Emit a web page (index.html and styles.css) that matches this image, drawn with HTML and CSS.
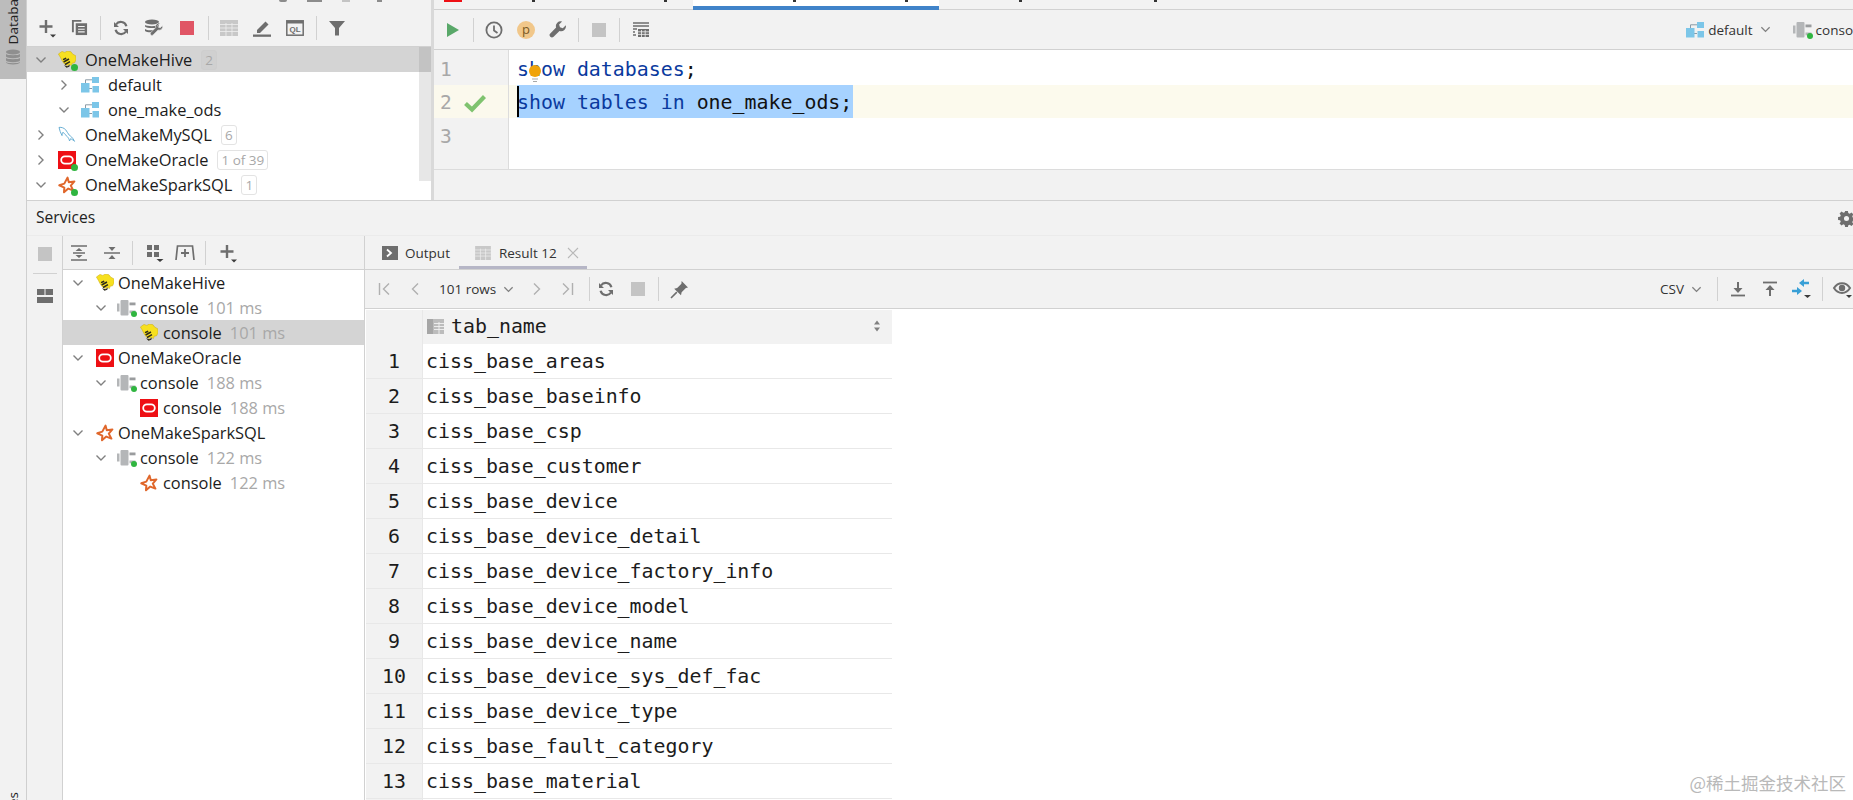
FILE: index.html
```html
<!DOCTYPE html>
<html lang="en">
<head>
<meta charset="utf-8">
<title>Services</title>
<link rel="stylesheet" href="styles.css">
</head>
<body>
<svg class="sprite" xmlns="http://www.w3.org/2000/svg">
  <symbol id="hive" viewBox="0 0 18 18">
    <path d="M.4 3 4 .4 6.800 1.400 9.400 0l3.600.8 1.800 2.400 3 1.600.2 4-1.400 3-2.400.4-.8 2.400-2-1.200-2.400 1-3-1.800-2-3L2.400 6.400z" fill="#f7e01f" stroke="#c9a80c" stroke-width=".5"/>
    <path d="M5 8.600l3.200-1.400M5.600 11l5.400-3M7 13.500l5-2.800" stroke="#2c2a1c" stroke-width="1.500" fill="none"/>
    <path d="M6 14.200l2.500 2.600 2.800-1 .6-2.200-2.500 1.600z" fill="#2c2a1c"/>
  </symbol>
  <symbol id="oracle" viewBox="0 0 18 18">
    <rect width="18" height="18" fill="#ee0f14"/>
    <rect x="3.200" y="5.300" width="11.600" height="7.400" rx="3.700" fill="none" stroke="#fff" stroke-width="1.800"/>
  </symbol>
  <symbol id="spark" viewBox="0 0 18 18">
    <path d="M9.500 1.600l1.300 4.600 5.600-.8-3.600 4.200 2.600 5-5.100-2L6 16.300l.3-4.700-5-2.300 5-1.700z" fill="none" stroke="#e0672b" stroke-width="2" stroke-linejoin="round"/>
  </symbol>
  <symbol id="dolphin" viewBox="0 0 18 18">
    <path d="M1 1.400c2.600-.3 4.800.5 6.600 2.300 1.600 1.600 2.100 4 3.600 5.400 1.500 1.100 3.400 2.200 5.300 6.200-1.700-1.600-2.800-2-3.900-2.600-.2 1-.8 1.600-1.100 2.200-.3-1.600-.9-2.800-2.200-4.300C7.600 8.700 6.200 8 5 6.200 4.200 7.200 4 8.300 4 9.600 2.700 7.300 1.600 4.200 1 1.400z" fill="none" stroke="#5aa7cf" stroke-width=".9" stroke-linejoin="round"/>
  </symbol>
  <symbol id="schema" viewBox="0 0 18 16">
    <path d="M4.500 8V2.800h6.500M8 11.500h3" fill="none" stroke="#8a9aa6" stroke-width="1"/>
    <rect x="11" y="0" width="7" height="6" fill="#7cc6e8"/>
    <rect x="0" y="6" width="8.500" height="9.500" fill="#7cc6e8"/>
    <rect x="11.500" y="9" width="6.500" height="6.500" fill="#7cc6e8"/>
  </symbol>
  <symbol id="plug" viewBox="0 0 20 16">
    <rect x="0" y="3.500" width="2.500" height="8" fill="#b4b6b8"/>
    <rect x="3.500" y="0" width="8" height="15.500" rx="1" fill="#b4b6b8"/>
    <rect x="12.500" y="2.500" width="6" height="2.800" fill="#9a9c9e"/>
    <rect x="12.500" y="10.500" width="6" height="2.800" fill="#b4b6b8"/>
  </symbol>
  <symbol id="chev-d" viewBox="0 0 12 12">
    <path d="M1.500 3.500 6 8l4.500-4.500" fill="none" stroke="#808080" stroke-width="1.400"/>
  </symbol>
  <symbol id="chev-r" viewBox="0 0 12 12">
    <path d="M3.500 1.500 8 6l-4.500 4.500" fill="none" stroke="#808080" stroke-width="1.400"/>
  </symbol>
  <symbol id="plus" viewBox="0 0 20 20">
    <path d="M7 1v13M.5 7.500h13" stroke="#6e6e6e" stroke-width="2.400" fill="none"/>
    <path d="M11 15.500h6l-3 3z" fill="#3c3c3c"/>
  </symbol>
  <symbol id="grid" viewBox="0 0 18 16">
    <rect width="18" height="16" fill="#c8c8c8"/>
    <path d="M0 4.500h18M0 8h18M0 11.500h18M6 3v13M12 3v13" stroke="#efefef" stroke-width=".8"/>
  </symbol>
  <symbol id="stop" viewBox="0 0 14 14"><rect width="14" height="14" fill="currentColor"/></symbol>
  <symbol id="refresh" viewBox="0 0 16 16">
    <path d="M13.400 6.200A5.800 5.800 0 0 0 3 4.500M2.600 9.800A5.800 5.800 0 0 0 13 11.500" fill="none" stroke="#6e6e6e" stroke-width="2.200"/>
    <path d="M1 2v5h5zM15 14V9h-5z" fill="#6e6e6e"/>
  </symbol>
  <symbol id="wrench" viewBox="0 0 18 18">
    <path d="M16.800 4.200l-3 3-2.800-.9-.9-2.800 3-3a4.800 4.800 0 0 0-6 6L1.300 12.400a2.300 2.300 0 0 0 3.300 3.300l5.900-5.800a4.800 4.800 0 0 0 6.300-5.700z" fill="#6e6e6e"/>
  </symbol>
</svg>

<div class="app">
  <aside class="stripe">
    <div class="stripe-tab">
      <span class="vtext">Database</span>
      <svg class="i-db" viewBox="0 0 16 16"><g fill="#8f8f8f"><ellipse cx="8" cy="3" rx="7" ry="2.600"/><path d="M1 5c1 1.600 13 1.600 14 0v2.500c-1 2.200-13 2.200-14 0zM1 9c1 1.600 13 1.600 14 0v2.500c-1 2.200-13 2.200-14 0zM1 13c1 1.600 13 1.600 14 0v.5c-1 2.600-13 2.600-14 0z"/></g></svg>
    </div>
    <span class="vtext vtext-bottom">Services</span>
  </aside>

  <main class="main">
    <section class="top">
      <div class="db">
        <div class="clip-row db-clip">
          <span class="frag frag-a"></span><span class="frag frag-b"></span><span class="frag frag-c"></span><span class="frag frag-d"></span>
        </div>
        <div class="toolbar db-toolbar">
          <span class="slot"><svg class="ic20 pl"><use href="#plus"/></svg></span>
          <span class="slot"><svg class="ic16b" viewBox="0 0 18 18"><path d="M1 1h10v2H3v11H1z" fill="#6e6e6e"/><path d="M5 4.500h12V17H5z" fill="#6e6e6e"/><path d="M7.500 8h7M7.500 10.800h7M7.500 13.600h7" stroke="#f2f2f2" stroke-width="1.200"/></svg></span>
          <i class="sep"></i>
          <span class="slot"><svg class="ic16"><use href="#refresh"/></svg></span>
          <span class="slot"><svg class="ic20b" viewBox="0 0 20 18"><ellipse cx="8" cy="3" rx="7" ry="2.500" fill="#6e6e6e"/><path d="M1 6c1.500 1.500 12 1.500 14 0v1.500c-2 2-12 2-14 0zM1 10c1.500 1.500 6 1.500 8 1v2c-2 .5-7 .2-8-1z" fill="#6e6e6e"/><path d="M18.500 6.500l-2.300 2.300-1.800-.6-.6-1.700 2.300-2.300a3.500 3.500 0 0 0-4.400 4.400l-5 5a1.700 1.700 0 0 0 2.400 2.400l5-5a3.500 3.500 0 0 0 4.400-4.500z" fill="#6e6e6e" stroke="#f2f2f2" stroke-width=".6"/></svg></span>
          <span class="slot"><svg class="ic14 red"><use href="#stop"/></svg></span>
          <i class="sep"></i>
          <span class="slot"><svg class="ic18w"><use href="#grid"/></svg></span>
          <span class="slot"><svg class="ic18" viewBox="0 0 18 18"><path d="M4 11 12.500 2.500l3 3L7 14H4z" fill="#6e6e6e"/><rect x="0" y="15.500" width="18" height="2.300" fill="#6e6e6e"/></svg></span>
          <span class="slot"><svg class="ic18" viewBox="0 0 18 18"><rect x=".8" y="1.800" width="16.400" height="14.400" fill="none" stroke="#6e6e6e" stroke-width="1.500"/><rect x="1" y="2" width="16" height="2.500" fill="#6e6e6e"/><text class="ql" x="9" y="13.400" text-anchor="middle">QL</text></svg></span>
          <i class="sep"></i>
          <span class="slot"><svg class="ic16" viewBox="0 0 16 16"><path d="M0 1h16L10 8v7.500H6V8z" fill="#6e6e6e"/></svg></span>
        </div>
        <div class="tree db-tree">
          <div class="node sel l0"><svg class="chev"><use href="#chev-d"/></svg><span class="ico"><svg class="ic18"><use href="#hive"/></svg><b class="dot"></b></span><span class="name">OneMakeHive</span><span class="count plain">2</span></div>
          <div class="node l1"><svg class="chev"><use href="#chev-r"/></svg><svg class="sch"><use href="#schema"/></svg><span class="name">default</span></div>
          <div class="node l1"><svg class="chev"><use href="#chev-d"/></svg><svg class="sch"><use href="#schema"/></svg><span class="name">one_make_ods</span></div>
          <div class="node l0"><svg class="chev"><use href="#chev-r"/></svg><span class="ico"><svg class="ic18"><use href="#dolphin"/></svg></span><span class="name">OneMakeMySQL</span><span class="count">6</span></div>
          <div class="node l0"><svg class="chev"><use href="#chev-r"/></svg><span class="ico"><svg class="ic18"><use href="#oracle"/></svg><b class="dot"></b></span><span class="name">OneMakeOracle</span><span class="count">1 of 39</span></div>
          <div class="node l0"><svg class="chev"><use href="#chev-d"/></svg><span class="ico"><svg class="ic18"><use href="#spark"/></svg><b class="dot"></b></span><span class="name">OneMakeSparkSQL</span><span class="count">1</span></div>
          <i class="overlay-scroll"></i>
        </div>
      </div>

      <div class="editor">
        <div class="tabbar">
          <span class="tab t1"><i class="tab-red"></i><span class="br br1"></span><span class="br br2"></span></span>
          <span class="tab active"><span class="br br3"></span><span class="br br4"></span></span>
          <span class="tab t3"><span class="br br5"></span><span class="br br6"></span></span>
        </div>
        <div class="toolbar ed-toolbar">
          <span class="slot"><svg class="ed-run" viewBox="0 0 14 16"><path d="M1 1l12 7-12 7z" fill="#59a869"/></svg></span>
          <i class="sep"></i>
          <span class="slot"><svg class="ic18" viewBox="0 0 18 18"><circle cx="9" cy="9" r="7.600" fill="none" stroke="#6e6e6e" stroke-width="1.800"/><path d="M9 4.500V9.500l3.500 2.500" fill="none" stroke="#6e6e6e" stroke-width="1.800"/></svg></span>
          <span class="slot"><span class="pbadge">p</span></span>
          <span class="slot"><svg class="ic18"><use href="#wrench"/></svg></span>
          <i class="sep"></i>
          <span class="slot"><svg class="ic14 muted"><use href="#stop"/></svg></span>
          <i class="sep"></i>
          <span class="slot"><svg class="ic18" viewBox="0 0 18 18"><path d="M1 2h16M1 5h16M1 8h4M1 11h2M1 14h3" stroke="#6e6e6e" stroke-width="1.400"/><path d="M6 8h11v8H6z" fill="#6e6e6e"/><path d="M6 10.800h11M6 13.400h11M9.500 9v7M13.200 9v7" stroke="#f2f2f2" stroke-width=".8"/></svg></span>
          <span class="spacer"></span>
          <svg class="sch"><use href="#schema"/></svg>
          <span class="tb-label">default</span>
          <svg class="chev chev-tb"><use href="#chev-d"/></svg>
          <span class="plugwrap tb-plug"><svg class="plug"><use href="#plug"/></svg><b class="dot small"></b></span>
          <span class="tb-label tb-console">console</span>
        </div>
        <div class="code">
          <div class="gutter">
            <div class="gl">1</div>
            <div class="gl cur">2<svg class="check" viewBox="0 0 22 18"><path d="M1.500 9.500 8 15.500 20.500 2.500" fill="none" stroke="#7fc36f" stroke-width="4.200"/></svg></div>
            <div class="gl">3</div>
          </div>
          <div class="lines">
            <div class="line"><span class="kw">show databases</span>;<svg class="bulb" viewBox="0 0 14 19"><circle cx="7" cy="6" r="6" fill="#f0a30a"/><path d="M4 14h6M5 16.500h4" stroke="#a8a8a8" stroke-width="1.200"/></svg></div>
            <div class="line cur"><span class="selection"><i class="caret"></i><span class="kw">show tables in</span> one_make_ods;</span></div>
            <div class="line"></div>
          </div>
        </div>
        <div class="ed-foot"></div>
      </div>
    </section>

    <section class="services">
      <header class="svc-head">
        <span>Services</span>
        <svg class="gear" viewBox="0 0 16 16"><path fill="#6e6e6e" fill-rule="evenodd" d="M6.500 0h3l.4 2.200 1.500.7L13.300 1.600l2.100 2.100-1.300 1.900.7 1.500L17 7v3l-2.200.4-.7 1.500 1.300 1.900-2.100 2.100-1.900-1.300-1.500.7L9.500 17h-3l-.4-2.200-1.500-.7-1.900 1.300L.6 13.300l1.300-1.900-.7-1.500L-1 9.500v-3l2.200-.4.700-1.500L.6 2.700 2.700.6l1.900 1.300 1.500-.7zM8 5.300a2.700 2.700 0 1 0 0 5.400 2.700 2.700 0 0 0 0-5.400z"/></svg>
      </header>
      <div class="svc-body">
        <div class="mini">
          <svg class="ic14 muted"><use href="#stop"/></svg>
          <i class="hsep"></i>
          <svg class="ic16" viewBox="0 0 16 16"><path d="M0 1h7.500v6H0zM8.500 1H16v6H8.500zM0 9h16v6H0z" fill="#6e6e6e"/></svg>
        </div>
        <div class="svc-tree">
          <div class="toolbar st-toolbar">
            <span class="slot"><svg class="ic16" viewBox="0 0 16 16"><path d="M0 1h16M0 15h16M2 8h12" stroke="#6e6e6e" stroke-width="1.500"/><path d="M8 3l3.500 3h-7zM8 13l3.500-3h-7z" fill="#6e6e6e"/></svg></span>
            <span class="slot"><svg class="ic16" viewBox="0 0 16 16"><path d="M0 8h16" stroke="#6e6e6e" stroke-width="1.500"/><path d="M8 6 4.500 2h7zM8 10l3.500 4h-7z" fill="#6e6e6e"/></svg></span>
            <i class="sep"></i>
            <span class="slot slot-group"><svg class="ic18" viewBox="0 0 18 18"><path d="M1 1h5v5H1zM8 1h5v5H8zM1 8h5v5H1zM8 8h5v5H8z" fill="#6e6e6e"/><path d="M10.500 15h7l-3.500 3z" fill="#3c3c3c"/></svg></span>
            <span class="slot"><svg class="ic20" viewBox="0 0 20 20"><path d="M1 17 2.500 3h15L19 17" fill="none" stroke="#6e6e6e" stroke-width="1.700"/><path d="M10 6v8M6 10h8" stroke="#6e6e6e" stroke-width="1.800"/></svg></span>
            <i class="sep"></i>
            <span class="slot slot-add"><svg class="ic20 pl"><use href="#plus"/></svg></span>
          </div>
          <div class="tree">
            <div class="node s0"><svg class="chev"><use href="#chev-d"/></svg><svg class="ic18 sicon"><use href="#hive"/></svg><span class="name">OneMakeHive</span></div>
            <div class="node s1"><svg class="chev"><use href="#chev-d"/></svg><span class="plugwrap"><svg class="plug"><use href="#plug"/></svg><b class="dot small"></b></span><span class="name">console</span><span class="ms">101 ms</span></div>
            <div class="node sel s2"><svg class="ic18 sicon"><use href="#hive"/></svg><span class="name">console</span><span class="ms">101 ms</span></div>
            <div class="node s0"><svg class="chev"><use href="#chev-d"/></svg><svg class="ic18 sicon"><use href="#oracle"/></svg><span class="name">OneMakeOracle</span></div>
            <div class="node s1"><svg class="chev"><use href="#chev-d"/></svg><span class="plugwrap"><svg class="plug"><use href="#plug"/></svg><b class="dot small"></b></span><span class="name">console</span><span class="ms">188 ms</span></div>
            <div class="node s2"><svg class="ic18 sicon"><use href="#oracle"/></svg><span class="name">console</span><span class="ms">188 ms</span></div>
            <div class="node s0"><svg class="chev"><use href="#chev-d"/></svg><svg class="ic18 sicon"><use href="#spark"/></svg><span class="name">OneMakeSparkSQL</span></div>
            <div class="node s1"><svg class="chev"><use href="#chev-d"/></svg><span class="plugwrap"><svg class="plug"><use href="#plug"/></svg><b class="dot small"></b></span><span class="name">console</span><span class="ms">122 ms</span></div>
            <div class="node s2"><svg class="ic18 sicon"><use href="#spark"/></svg><span class="name">console</span><span class="ms">122 ms</span></div>
          </div>
        </div>
        <div class="results">
          <div class="res-tabs">
            <span class="rtab"><svg class="rt-ico" viewBox="0 0 16 14"><rect width="16" height="14" fill="#6e6e6e"/><path d="M5 3.500 9 7l-4 3.500" fill="none" stroke="#fff" stroke-width="1.800"/></svg>Output</span>
            <span class="rtab on"><svg class="rt-ico"><use href="#grid"/></svg>Result 12<svg class="close" viewBox="0 0 12 12"><path d="M1 1l10 10M11 1 1 11" stroke="#b8b8b8" stroke-width="1.100"/></svg></span>
          </div>
          <div class="toolbar res-toolbar">
            <svg class="nav" viewBox="0 0 14 14"><path d="M1.500 1v12M11 1.500 5.500 7l5.500 5.500" fill="none" stroke="#b0b0b0" stroke-width="1.400"/></svg>
            <svg class="nav" viewBox="0 0 14 14"><path d="M10 1.500 4.500 7l5.500 5.500" fill="none" stroke="#b0b0b0" stroke-width="1.400"/></svg>
            <span class="rows">101 rows<svg class="chev chev-rows"><use href="#chev-d"/></svg></span>
            <svg class="nav" viewBox="0 0 14 14"><path d="M4 1.500 9.500 7 4 12.500" fill="none" stroke="#b0b0b0" stroke-width="1.400"/></svg>
            <svg class="nav" viewBox="0 0 14 14"><path d="M12.500 1v12M3 1.500 8.500 7 3 12.500" fill="none" stroke="#b0b0b0" stroke-width="1.400"/></svg>
            <i class="sep"></i>
            <span class="slot"><svg class="ic16"><use href="#refresh"/></svg></span>
            <span class="slot"><svg class="ic14 muted"><use href="#stop"/></svg></span>
            <i class="sep"></i>
            <span class="slot"><svg class="ic16b" viewBox="0 0 16 16"><path d="M10 0l6 6-2 .6-4 4-.6 2.900L3 7.200l2.800-.6 4-4z" fill="#6e6e6e"/><path d="M5.500 10.500 0 16" stroke="#6e6e6e" stroke-width="1.500"/></svg></span>
            <span class="spacer"></span>
            <span class="csv">CSV<svg class="chev chev-rows"><use href="#chev-d"/></svg></span>
            <i class="sep"></i>
            <span class="slot"><svg class="ic16" viewBox="0 0 16 16"><path d="M8 1v8" stroke="#6e6e6e" stroke-width="2"/><path d="M3.500 7h9L8 12z" fill="#6e6e6e"/><path d="M1 14.500h14" stroke="#6e6e6e" stroke-width="1.800"/></svg></span>
            <span class="slot"><svg class="ic16" viewBox="0 0 16 16"><path d="M1 1.500h14" stroke="#6e6e6e" stroke-width="1.800"/><path d="M8 7v8" stroke="#6e6e6e" stroke-width="2"/><path d="M3.500 9h9L8 4z" fill="#6e6e6e"/></svg></span>
            <span class="slot"><svg class="ic20" viewBox="0 0 20 20"><path d="M0 12h6M11 4h6" stroke="#389fd6" stroke-width="2.400"/><path d="M5 8l5 4-5 4zM12 0 7 4l5 4z" fill="#389fd6"/><path d="M12 16h7l-3.500 3z" fill="#3c3c3c"/></svg></span>
            <i class="sep"></i>
            <span class="slot"><svg class="ic20" viewBox="0 0 20 20"><path d="M1 9c4-6.500 12-6.500 16 0-4 6.500-12 6.500-16 0z" fill="none" stroke="#6e6e6e" stroke-width="2"/><circle cx="9" cy="9" r="3.200" fill="#6e6e6e"/><path d="M13 16h6l-3 3z" fill="#3c3c3c"/></svg></span>
          </div>
          <div class="grid">
            <div class="ghead">
              <span class="gnum"></span>
              <span class="gcell gtitle"><svg class="col-ico" viewBox="0 0 17 15"><rect width="17" height="15" fill="#bcbcbc"/><path d="M7 4.500h10M7 7.500h10M7 10.500h10M12 3v12" stroke="#f2f2f2" stroke-width=".9"/><rect x="0" width="6" height="15" fill="#a6a6a6"/></svg>tab_name<svg class="sort" viewBox="0 0 8 12"><path d="M4 .5l3 4H1zM4 11.500l3-4H1z" fill="#808080"/></svg></span>
            </div>
            <div class="grow"><span class="gnum">1</span><span class="gcell">ciss_base_areas</span></div>
            <div class="grow"><span class="gnum">2</span><span class="gcell">ciss_base_baseinfo</span></div>
            <div class="grow"><span class="gnum">3</span><span class="gcell">ciss_base_csp</span></div>
            <div class="grow"><span class="gnum">4</span><span class="gcell">ciss_base_customer</span></div>
            <div class="grow"><span class="gnum">5</span><span class="gcell">ciss_base_device</span></div>
            <div class="grow"><span class="gnum">6</span><span class="gcell">ciss_base_device_detail</span></div>
            <div class="grow"><span class="gnum">7</span><span class="gcell">ciss_base_device_factory_info</span></div>
            <div class="grow"><span class="gnum">8</span><span class="gcell">ciss_base_device_model</span></div>
            <div class="grow"><span class="gnum">9</span><span class="gcell">ciss_base_device_name</span></div>
            <div class="grow"><span class="gnum">10</span><span class="gcell">ciss_base_device_sys_def_fac</span></div>
            <div class="grow"><span class="gnum">11</span><span class="gcell">ciss_base_device_type</span></div>
            <div class="grow"><span class="gnum">12</span><span class="gcell">ciss_base_fault_category</span></div>
            <div class="grow"><span class="gnum">13</span><span class="gcell">ciss_base_material</span></div>
            <div class="grow"><span class="gnum"></span><span class="gcell"></span></div>
          </div>
        </div>
      </div>
    </section>
  </main>
</div>
<div class="watermark">@稀土掘金技术社区</div>
</body>
</html>
```

FILE: styles.css
```css
* { box-sizing: border-box; }
html, body { margin: 0; height: 100%; overflow: hidden; }
body {
  width: 1853px;
  height: 800px;
  background: #fff;
  color: #1c1c1c;
  font-family: "Open Sans", "Noto Sans", "Liberation Sans", sans-serif;
  font-size: 16.4px;
  position: relative;
}
.sprite { width: 0; height: 0; position: absolute; }
svg { display: block; flex: none; overflow: visible; }
i, b { display: block; font-style: normal; }

.app { display: flex; height: 800px; }

/* left stripe */
.stripe {
  width: 27px;
  flex: none;
  background: #f2f2f2;
  border-right: 1px solid #cfcfcf;
  display: flex;
  flex-direction: column;
  overflow: hidden;
}
.stripe-tab {
  height: 79px;
  width: 26px;
  background: #bcbcbc;
  display: flex;
  flex-direction: column;
  justify-content: flex-end;
  align-items: center;
  padding-bottom: 14px;
  gap: 5px;
  overflow: hidden;
}
.vtext {
  writing-mode: vertical-rl;
  transform: rotate(180deg);
  font-size: 13.5px;
  line-height: 16px;
  color: #222;
  flex: none;
}
.i-db { width: 16px; height: 16px; }
.vtext-bottom { margin-top: auto; margin-bottom: -43px; align-self: center; }

.main { flex: 1; min-width: 0; display: flex; flex-direction: column; }

/* top */
.top { height: 201px; flex: none; display: flex; border-bottom: 1px solid #d1d1d1; }
.db {
  width: 407px;
  flex: none;
  background: #fff;
  display: flex;
  flex-direction: column;
  border-right: 3px solid #d9d9d9;
  background-clip: padding-box;
}
.clip-row { height: 9px; background: #f2f2f2; display: flex; align-items: flex-start; flex: none; }
.frag { display: block; background: #8c8c8c; height: 2px; }
.frag-a { width: 8px; margin-left: 252px; border-radius: 0 0 4px 4px; }
.frag-b { width: 15px; margin-left: 20px; }
.frag-c { width: 8px; margin-left: 20px; background: #c4c4c4; }
.frag-d { width: 5px; margin-left: 27px; }

.toolbar { display: flex; align-items: center; background: #f2f2f2; flex: none; }
.slot { width: 33px; flex: none; display: flex; align-items: center; justify-content: center; }
.sep { width: 1px; height: 24px; background: #d1d1d1; flex: none; margin: 0 4px; }
.spacer { flex: 1; }
.ic14 { width: 14px; height: 14px; }
.ic16 { width: 16px; height: 16px; }
.ic16b { width: 17px; height: 17px; }
.ic18 { width: 18px; height: 18px; flex: none; }
.ic18w { width: 18px; height: 16px; }
.ic20 { width: 20px; height: 20px; }
.ic20b { width: 20px; height: 18px; }
.ic20.pl { transform: translate(3px, 1px); }
.red { color: #e05565; }
.muted { color: #c4c4c4; }
.ql { font: bold 8px "Liberation Sans", sans-serif; fill: #6e6e6e; }

.db-toolbar {
  height: 38px;
  padding-left: 2.5px;
  border-bottom: 1px solid #d1d1d1;
}

.tree { position: relative; background: #fff; flex: 1; overflow: hidden; }
.node {
  height: 25px;
  display: flex;
  align-items: center;
  white-space: nowrap;
  line-height: 25px;
}
.node.sel { background: #d4d4d4; }
.chev { width: 12px; height: 12px; flex: none; }
.l0 { padding-left: 8px; }
.l0 .ico { margin-left: 11px; position: relative; width: 18px; height: 18px; flex: none; }
.l0 .name { margin-left: 9px; }
.l1 { padding-left: 31px; }
.sch { width: 18px; height: 16px; flex: none; }
.l1 .sch { margin-left: 11px; }
.l1 .name { margin-left: 9px; }
.dot {
  position: absolute;
  right: -2px;
  bottom: -2px;
  width: 7px;
  height: 7px;
  border-radius: 50%;
  background: #30b540;
}
.count {
  margin-left: 9px;
  font-size: 13.5px;
  line-height: 18px;
  height: 20px;
  padding: 0 3px;
  color: #a8a8a8;
  border: 1px solid #e3e3e3;
  border-radius: 3px;
}
.count.plain { background: #d0d0d0; border-color: #cecece; }
.overlay-scroll {
  position: absolute;
  right: 0;
  top: 0;
  width: 12px;
  height: 134px;
  background: rgba(120, 120, 120, .18);
}

/* editor */
.editor { flex: 1; min-width: 0; display: flex; flex-direction: column; background: #f2f2f2; }
.tabbar {
  height: 10px;
  flex: none;
  display: flex;
  border-bottom: 1px solid #d1d1d1;
  background: #f2f2f2;
}
.tab { position: relative; display: block; height: 9px; }
.t1 { width: 259px; }
.tab-red { position: absolute; left: 10px; top: 0; width: 18px; height: 2px; background: #ee0f14; }
.active { width: 246px; background: #fff; border-bottom: 4px solid #4083c9; height: 10px; }
.t3 { flex: 1; }
.br { position: absolute; top: 0; width: 3px; height: 2px; background: #333; }
.br1 { left: 98px; }
.br2 { left: 230px; }
.br3 { left: 100px; }
.br4 { left: 212px; }
.br5 { left: 80px; }
.br6 { left: 215px; }

.ed-toolbar {
  height: 40px;
  padding-left: 3px;
  border-bottom: 1px solid #d1d1d1;
}
.ed-toolbar .slot { width: 32px; }
.ed-toolbar .slot:nth-of-type(6) { margin-left: 1px; }
.ed-run { width: 14px; height: 16px; }
.pbadge {
  width: 18px;
  height: 18px;
  border-radius: 50%;
  background: #f1c78a;
  color: #7a5a24;
  font-size: 13px;
  line-height: 16px;
  text-align: center;
  flex: none;
}
.tb-label { font-size: 13.5px; color: #333; margin-left: 4px; }
.chev-tb { margin-left: 7px; width: 11px; height: 11px; }
.plugwrap { position: relative; width: 20px; height: 16px; flex: none; display: block; }
.plug { width: 20px; height: 16px; }
.dot.small { width: 6px; height: 6px; right: 0; bottom: -1px; }
.tb-plug { margin-left: 22px; }
.tb-console { margin-left: 3px; margin-right: -11px; }

.code { height: 119px; flex: none; display: flex; background: #fff; }
.gutter {
  width: 75px;
  flex: none;
  background: #f2f2f2;
  border-right: 1px solid #dcdcdc;
  padding-top: 1px;
}
.gl {
  height: 33.5px;
  padding-left: 6px;
  padding-top: 3px;
  font: 19.5px/33.5px "DejaVu Sans Mono", monospace;
  color: #a8a8a8;
  display: flex;
  align-items: center;
  gap: 12px;
}
.gl.cur { background: #fbf9ed; }
.check { width: 22px; height: 18px; }
.lines { flex: 1; min-width: 0; padding-top: 1px; }
.line {
  height: 33.5px;
  padding-left: 8px;
  font: 19.9px/37px "DejaVu Sans Mono", monospace;
  color: #111;
  white-space: pre;
  position: relative;
}
.line.cur { background: #fcfaed; }
.kw { color: #0a3a9e; }
.selection { display: inline-block; background: #a6d2ff; height: 33.5px; position: relative; padding-right: 1px; vertical-align: top; line-height: 36px; }
.caret { position: absolute; left: 0; top: 1px; bottom: 1px; width: 2px; background: #000; }
.bulb { position: absolute; left: 19px; top: 14px; width: 14px; height: 19px; }
.ed-foot { flex: 1; background: #f2f2f2; border-top: 1px solid #dcdcdc; }

/* services */
.services { flex: 1; min-height: 0; display: flex; flex-direction: column; background: #f2f2f2; }
.svc-head {
  height: 34px;
  flex: none;
  display: flex;
  align-items: center;
  justify-content: space-between;
  padding: 0 0 2px 9px;
  font-size: 15.6px;
  color: #222;
}
.gear { width: 15px; height: 15px; margin-right: -1px; margin-top: 2px; }
.svc-body { flex: 1; min-height: 0; display: flex; border-top: 1px solid #ebebeb; }
.mini {
  width: 36px;
  flex: none;
  display: flex;
  flex-direction: column;
  align-items: center;
  padding-top: 11px;
  border-right: 1px solid #d1d1d1;
}
.mini .ic14 { margin-bottom: 12px; }
.hsep { width: 24px; height: 1px; background: #d1d1d1; margin-bottom: 14px; }
.svc-tree {
  width: 302px;
  flex: none;
  display: flex;
  flex-direction: column;
  border-right: 1px solid #d1d1d1;
  background: #fff;
}
.st-toolbar {
  height: 34px;
  border-bottom: 1px solid #d1d1d1;
}
.st-toolbar .slot { width: 32.5px; }
.st-toolbar .sep { margin: 0 3.5px; }
.st-toolbar .slot-group { margin-left: 3px; margin-right: -3px; }
.st-toolbar .slot-add { margin-left: 2px; }
.s0 { padding-left: 9px; }
.s0 .sicon { margin-left: 12px; }
.s0 .name { margin-left: 4px; }
.s1 { padding-left: 32px; }
.s1 .plugwrap { margin-left: 10px; }
.s1 .name { margin-left: 3px; }
.s2 { padding-left: 77px; }
.s2 .name { margin-left: 5px; }
.ms { color: #a8a8a8; margin-left: 8px; }

/* results */
.results { flex: 1; min-width: 0; display: flex; flex-direction: column; background: #fff; }
.res-tabs {
  height: 34px;
  flex: none;
  display: flex;
  background: #f2f2f2;
  border-bottom: 1px solid #d1d1d1;
  padding-left: 17px;
  font-size: 13.5px;
}
.rtab {
  display: flex;
  align-items: center;
  height: 33px;
  color: #333;
  gap: 7px;
}
.rt-ico { width: 16px; height: 14px; }
.rtab.on {
  margin-left: 9px;
  padding: 0 8px 0 16px;
  box-shadow: inset 0 -3px 0 #b6b6c6;
  gap: 8px;
}
.close { width: 12px; height: 12px; margin-left: 2px; }
.res-toolbar {
  height: 39px;
  padding-left: 13px;
  border-bottom: 1px solid #d1d1d1;
}
.res-toolbar .slot { width: 32px; }
.res-toolbar .slot:last-child { margin-right: -6px; }
.res-toolbar .nav + .sep { margin-left: -1px; margin-right: 0; }
.nav { width: 14px; height: 14px; margin-right: 16px; }
.rows { display: flex; align-items: center; font-size: 13.5px; color: #333; margin-right: 16px; margin-left: 1px; }
.chev-rows { width: 11px; height: 11px; margin-left: 7px; }
.csv { display: flex; align-items: center; font-size: 13.5px; color: #333; margin-right: 11px; }

.grid {
  margin-top: 1px;
  margin-left: 1px;
  width: 526px;
  font-family: "DejaVu Sans Mono", monospace;
  font-size: 19.9px;
  color: #1c1c1c;
}
.ghead { display: flex; height: 34px; background: #f2f2f2; }
.ghead .gcell { padding-bottom: 2px; padding-left: 4px; }
.grow { display: flex; height: 35px; border-bottom: 1px solid #e8e8e8; }
.gnum {
  width: 56px;
  flex: none;
  background: #f2f2f2;
  text-align: center;
  line-height: 35px;
}
.gcell { flex: 1; padding-left: 3px; line-height: 35px; border-left: 1px solid #e8e8e8; white-space: nowrap; }
.gtitle { display: flex; align-items: center; }
.col-ico { width: 17px; height: 15px; margin-right: 7px; }
.sort { width: 8px; height: 12px; margin-left: auto; margin-right: 11px; }

.watermark {
  position: absolute;
  right: 7px;
  bottom: 5px;
  font: 17.5px "Noto Sans CJK SC", sans-serif;
  color: #b9b9b9;
  white-space: nowrap;
}
```
